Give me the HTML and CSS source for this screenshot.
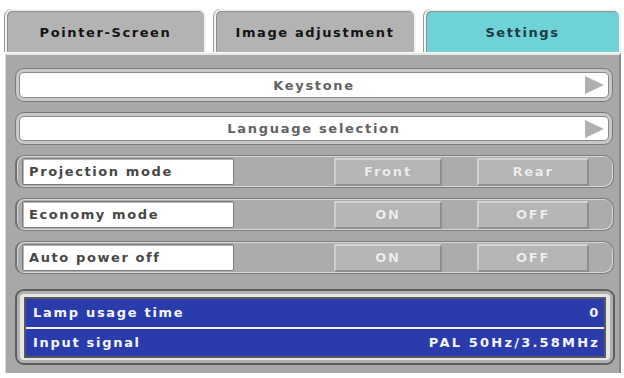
FILE: index.html
```html
<!DOCTYPE html>
<html>
<head>
<meta charset="utf-8">
<link rel="stylesheet" href="styles.css">
</head>
<body>
<div class="screen">
  <div class="tabs">
    <div class="tab tab-1">Pointer-Screen</div>
    <div class="tab tab-2">Image adjustment</div>
    <div class="tab tab-3 active">Settings</div>
  </div>
  <div class="panel">
    <div class="wide-btn"><span class="wide-label">Keystone</span><span class="arrow"></span></div>
    <div class="wide-btn short"><span class="wide-label">Language selection</span><span class="arrow"></span></div>
    <div class="setting">
      <div class="label">Projection mode</div>
      <div class="opt opt-a">Front</div>
      <div class="opt opt-b">Rear</div>
    </div>
    <div class="setting">
      <div class="label">Economy mode</div>
      <div class="opt opt-a">ON</div>
      <div class="opt opt-b">OFF</div>
    </div>
    <div class="setting">
      <div class="label">Auto power off</div>
      <div class="opt opt-a">ON</div>
      <div class="opt opt-b">OFF</div>
    </div>
    <div class="info">
      <div class="info-inner">
        <div class="info-row"><span>Lamp usage time</span><span>0</span></div>
        <div class="info-row"><span>Input signal</span><span class="signal">PAL 50Hz/3.58MHz</span></div>
      </div>
    </div>
  </div>
</div>
</body>
</html>
```
FILE: styles.css
```css
* { box-sizing: border-box; }
html, body { margin: 0; padding: 0; background: #ffffff; }
body {
  width: 624px; height: 378px; overflow: hidden;
  font-family: "DejaVu Sans", sans-serif;
  font-weight: bold;
}
.screen { padding: 9px 3px 0 5px; }
.tabs { display: flex; height: 43px; }
.tab {
  height: 43px;
  display: flex; align-items: center; justify-content: center;
  font-size: 13px; letter-spacing: 1.6px; color: #141414;
  background: #b3b3b3;
  border: 2px solid #f2f2f2;
  border-bottom: none;
  border-radius: 7px 7px 0 0;
  box-shadow: inset 1px 1px 0 #8e8e8e, -1px 0 0 #9a9a9a;
  padding-top: 2px;
}
.tab-1 { width: 201px; margin-right: 8px; }
.tab-2 { width: 202px; margin-right: 8px; }
.tab-3 { width: 197px; }
.tab.active { background: #6fd2d6; color: #1f3a44; border-color: #f4f4f4; }
.panel {
  height: 320px;
  margin-top: 1px;
  background: #a8a8a8;
  border-top: 2px solid #e9e9e9;
  border-left: 1px solid #d8d8d8;
  border-right: 2px solid #8a8a8a;
  padding: 13px 5px 0 9px;
  display: flex; flex-direction: column; gap: 10px;
}
.wide-btn {
  height: 34px;
  flex: none;
  border-radius: 9px;
  background: #ffffff;
  border: 1px solid #7a7a7a;
  box-shadow: inset 0 0 0 3px #c8c8c8, inset 0 0 0 4px #8a8a8a;
  display: flex; align-items: center; justify-content: center;
  position: relative;
  font-size: 13px; letter-spacing: 1.7px; color: #626262;
  margin-right: 1px;
}
.wide-btn.short { height: 33px; }
.arrow {
  position: absolute; right: 8px; top: 7px;
  width: 0; height: 0;
  border-top: 9px solid transparent;
  border-bottom: 9px solid transparent;
  border-left: 19px solid #b0b0b0;
}
.setting {
  height: 33px;
  flex: none;
  border-radius: 9px 10px 10px 9px;
  border: 1px solid #7e7e7e;
  border-left: 2px solid #707070;
  box-shadow: inset 1px 1px 0 #d6d6d6, inset -1px -1px 0 #d6d6d6;
  background: #acacac;
  display: flex; align-items: center;
  padding: 0 0 0 5px;
}
.label {
  width: 212px; height: 27px;
  background: #ffffff;
  border: 1px solid #7d7d7d;
  border-radius: 2px;
  box-shadow: inset 1px 1px 0 #b5b5b5;
  display: flex; align-items: center;
  padding-left: 6px;
  font-size: 13px; letter-spacing: 1.6px; color: #474747;
}
.opt {
  height: 28px;
  background: #b6b6b6;
  border-top: 2px solid #d4d4d4;
  border-left: 2px solid #cfcfcf;
  border-right: 2px solid #8f8f8f;
  border-bottom: 2px solid #8f8f8f;
  display: flex; align-items: center; justify-content: center;
  font-size: 13px; letter-spacing: 1.8px; color: #eeeeee;
  text-shadow: 0 0 1px #9a9a9a;
}
.opt-a { width: 108px; margin-left: 100px; }
.opt-b { width: 112px; margin-left: 35px; }
.info {
  margin-top: 5px;
  height: 76px;
  flex: none;
  margin-right: -1px;
  border-radius: 9px;
  background: #e6e6e6;
  border: 2px solid #5e5e5e;
  box-shadow: inset 0 0 0 3px #b0b0b0;
  padding: 6px 7px 5px 7px;
}
.info-inner {
  height: 100%;
  border: 2px solid #5a5a5a;
  background: #f0f0f0;
  display: flex; flex-direction: column; gap: 2px;
}
.info-row {
  flex: 1;
  background: #2a3bab;
  display: flex; justify-content: space-between; align-items: center;
  padding: 0 4px 0 7px;
  color: #f4f6ff;
  font-size: 13px; letter-spacing: 1.7px;
}
.signal { letter-spacing: 2.2px; }
```
